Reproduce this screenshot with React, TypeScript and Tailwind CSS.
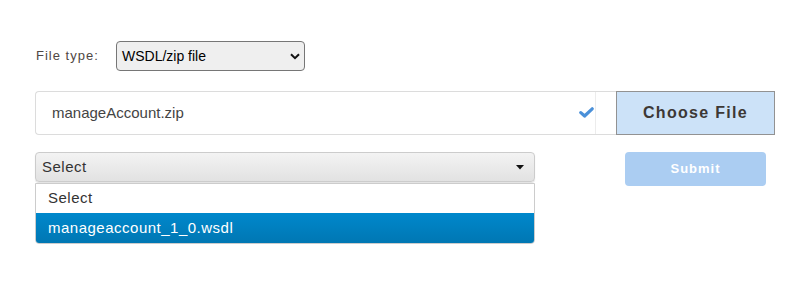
import React from 'react';

const font = { fontFamily: '"Liberation Sans", Arial, sans-serif' };

export default function App() {
  return (
    <div className="w-[805px] h-[297px] bg-white pt-[41px] pl-[35px]" style={font}>
      {/* File type row */}
      <div className="flex items-center h-[30px]">
        <span className="w-[81px] pl-[1px] text-[13px] tracking-[1px] text-[#4f4744]">File type:</span>
        <div className="flex items-center justify-between w-[189px] h-[30px] pl-[5px] pr-[4px] bg-[#efefef] border border-[#767676] rounded-[4px] text-[14px] text-black">
          <span>WSDL/zip file</span>
          <svg width="10" height="7" viewBox="0 0 10 7">
            <path d="M1 1.2 L5 5.2 L9 1.2" fill="none" stroke="#111" strokeWidth="2" />
          </svg>
        </div>
      </div>

      {/* File chooser row */}
      <div className="flex mt-[20px] h-[44px]">
        <div className="flex w-[581px] border border-[#dcdcdc] border-r-0 rounded-l-[4px]">
          <div className="flex-1 flex items-center pl-[16px] text-[15px] text-[#444]">manageAccount.zip</div>
          <div className="flex items-center justify-end pr-[1px] w-[30px] border-r border-[#ececec]">
            <svg width="15" height="11" viewBox="0 0 15 11" className="-mt-[2px]">
              <path d="M1.8 5.6 L5.6 9 L13.2 1.8" fill="none" stroke="#4a90d9" strokeWidth="3.2" strokeLinejoin="round" strokeLinecap="round" />
            </svg>
          </div>
          <div className="w-[20px]" />
        </div>
        <div className="flex items-center justify-center w-[159px] bg-[#cce2f8] border border-[#929292] text-[16px] font-bold tracking-[1.3px] text-[#3c3835]">
          Choose File
        </div>
      </div>

      {/* Select + submit row */}
      <div className="flex mt-[17px]">
        <div className="w-[500px]">
          <div className="flex items-center justify-between h-[30px] pl-[6px] pr-[10px] border border-[#cccccc] rounded-[4px] bg-gradient-to-b from-[#f3f3f3] to-[#e2e2e2] shadow-[0_1px_1px_rgba(0,0,0,0.12)] text-[15px] tracking-[0.5px] text-[#333]">
            <span>Select</span>
            <svg width="8" height="5" viewBox="0 0 8 5">
              <path d="M0 0 L8 0 L4 4.5 Z" fill="#111" />
            </svg>
          </div>
          <div className="mt-[1px] border border-[#cccccc] rounded-b-[4px] overflow-hidden text-[15px] tracking-[0.5px]">
            <div className="flex items-center h-[29px] pl-[12px] bg-white text-[#333]">Select</div>
            <div className="flex items-center h-[30px] pl-[12px] bg-gradient-to-b from-[#0088cc] to-[#0077b3] text-white">
              manageaccount_1_0.wsdl
            </div>
          </div>
        </div>
        <div className="ml-[90px] flex items-center justify-center w-[141px] h-[34px] rounded-[4px] bg-[#abcdf2] text-white text-[13px] font-bold tracking-[1px]">
          Submit
        </div>
      </div>
    </div>
  );
}
